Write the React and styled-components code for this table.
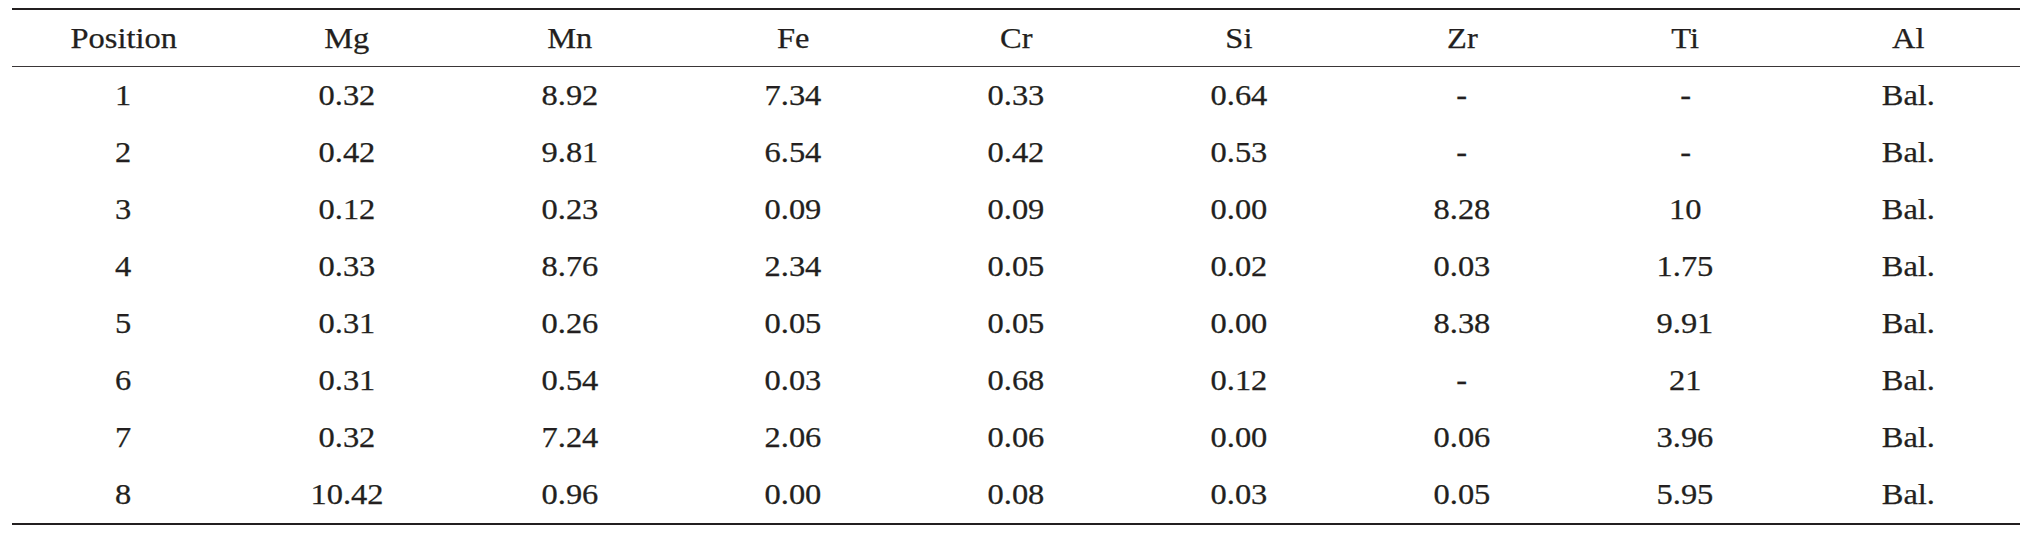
import React from 'react';
import styled, { createGlobalStyle } from 'styled-components';

const GlobalStyle = createGlobalStyle`
  html, body {
    margin: 0;
    padding: 0;
    background: #ffffff;
  }
  body {
    font-family: "Liberation Serif", "Times New Roman", serif;
    color: #231f20;
  }
`;

const COLUMNS = ['Position', 'Mg', 'Mn', 'Fe', 'Cr', 'Si', 'Zr', 'Ti', 'Al'];

const ROWS = [
  ['1', '0.32', '8.92', '7.34', '0.33', '0.64', '-', '-', 'Bal.'],
  ['2', '0.42', '9.81', '6.54', '0.42', '0.53', '-', '-', 'Bal.'],
  ['3', '0.12', '0.23', '0.09', '0.09', '0.00', '8.28', '10', 'Bal.'],
  ['4', '0.33', '8.76', '2.34', '0.05', '0.02', '0.03', '1.75', 'Bal.'],
  ['5', '0.31', '0.26', '0.05', '0.05', '0.00', '8.38', '9.91', 'Bal.'],
  ['6', '0.31', '0.54', '0.03', '0.68', '0.12', '-', '21', 'Bal.'],
  ['7', '0.32', '7.24', '2.06', '0.06', '0.00', '0.06', '3.96', 'Bal.'],
  ['8', '10.42', '0.96', '0.00', '0.08', '0.03', '0.05', '5.95', 'Bal.'],
];

const Page = styled.div`
  padding: 8px 11px 0 12px;
`;

const Table = styled.div`
  width: 2008px;
  border-top: 2px solid #231f20;
  border-bottom: 2px solid #231f20;
`;

const Row = styled.div`
  display: grid;
  grid-template-columns: repeat(9, 1fr);
  height: ${(p) => p.$height}px;
  border-bottom: ${(p) => (p.$head ? '1.5px solid #3a3637' : 'none')};
  box-sizing: content-box;
`;

const Cell = styled.div`
  display: flex;
  align-items: center;
  justify-content: center;
  padding-top: ${(p) => p.$offset}px;
  font-family: "Liberation Serif", "Times New Roman", serif;
  font-size: 28.5px;
  line-height: 1;
  -webkit-text-stroke: 0.25px #231f20;
`;

const Label = styled.span`
  display: inline-block;
  transform: scaleX(1.14);
  white-space: nowrap;
`;

const App = () => {
  return (
    <>
      <GlobalStyle />
      <Page>
        <Table>
          <Row $head $height={56}>
            {COLUMNS.map((col) => (
              <Cell key={col} $offset={3}>
                <Label>{col}</Label>
              </Cell>
            ))}
          </Row>
          {ROWS.map((row) => (
            <Row key={row[0]} $height={57}>
              {row.map((value, i) => (
                <Cell key={i} $offset={1}>
                  <Label>{value}</Label>
                </Cell>
              ))}
            </Row>
          ))}
        </Table>
      </Page>
    </>
  );
};

export default App;
